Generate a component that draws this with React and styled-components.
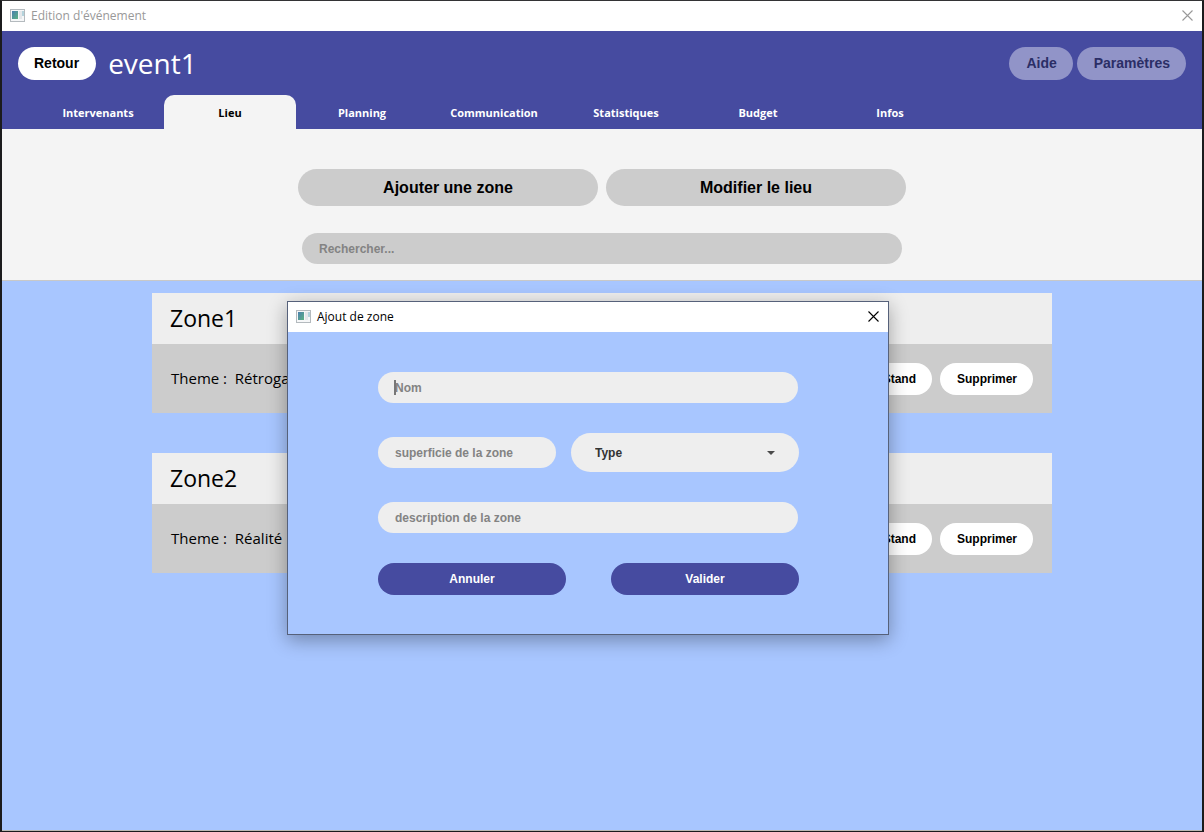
import React from "react";
import styled, { createGlobalStyle } from "styled-components";

const UI_FONT = '"Open Sans", "Noto Sans", sans-serif';
const CONTROL_FONT = '"Liberation Sans", Arial, sans-serif';

const GlobalStyle = createGlobalStyle`
  *, *::before, *::after { box-sizing: border-box; }
  body { margin: 0; background: #1b1b1d; font-family: ${UI_FONT}; color: #000; }
  h1, h2, p { margin: 0; font-weight: 400; }
  button, input, select { font-family: ${CONTROL_FONT}; font-weight: 700; border: 0; outline: 0; margin: 0; }
  button { cursor: pointer; }
`;

const Window = styled.div`
  min-height: 100vh;
  display: flex;
  flex-direction: column;
  border: solid #1b1b1d;
  border-width: 1px 2px;
  border-top-color: #333335;
`;

const TitleBar = styled.div`
  height: 30px;
  flex: none;
  display: flex;
  align-items: center;
  gap: 5px;
  padding: 0 9px 0 8px;
  background: #fff;
  font-size: 12px;
  line-height: 16px;
  color: ${(p) => (p.$active ? "#000" : "#999")};
`;

const TitleText = styled.span`
  flex: 1;
`;

const CloseButton = styled.button`
  display: flex;
  padding: 0 0 2px;
  background: none;
  color: inherit;
`;

const Header = styled.header`
  background: #464ba0;
  display: flex;
  flex-direction: column;
  gap: 15px;
`;

const HeaderRow = styled.div`
  display: flex;
  align-items: center;
  gap: 4px;
  padding: 16px 16px 0;
`;

const EventName = styled.h1`
  flex: 1;
  padding-left: 8px;
  font-size: 28px;
  line-height: 33px;
  color: #fff;
`;

const HeaderButton = styled.button`
  height: 33px;
  padding: 0 17px 2px 16px;
  border-radius: 17px;
  font-size: 14px;
  background: #fff;
  color: #000;

  &:disabled {
    padding: 0 16px 2px 17px;
    background: #9194c8;
    color: #2b2e66;
  }
`;

const Tabs = styled.nav`
  display: flex;
  padding-left: 30px;
`;

const Tab = styled.a`
  width: 132px;
  height: 34px;
  border-radius: 10px 10px 0 0;
  text-align: center;
  text-decoration: none;
  font-size: 11px;
  font-weight: 700;
  line-height: 35px;
  background: ${(p) => (p.$active ? "#f4f4f4" : "transparent")};
  color: ${(p) => (p.$active ? "#000" : "#fff")};
`;

const Tools = styled.section`
  display: flex;
  flex-direction: column;
  align-items: center;
  gap: 27px;
  padding: 40px 16px 16px;
  background: #f4f4f4;
  border-bottom: 1px solid #c8c8c8;
`;

const ToolButtons = styled.div`
  display: flex;
  gap: 8px;
`;

const ToolButton = styled.button`
  width: 300px;
  height: 37px;
  border-radius: 19px;
  background: #ccc;
  font-size: 16px;
  color: #000;
`;

const TextField = styled.input`
  width: 100%;
  max-width: ${(p) => p.$maxWidth || "none"};
  height: 31px;
  padding: 0 17px;
  border-radius: 16px;
  background: ${(p) => (p.$dark ? "#ccc" : "#eee")};
  font-size: 12px;
  color: #333;

  &::placeholder {
    color: #838383;
    opacity: 1;
  }
`;

const ZoneList = styled.main`
  flex: 1;
  display: flex;
  flex-direction: column;
  align-items: center;
  gap: 40px;
  padding: 12px 16px;
  background: #a8c6ff;
  border-bottom: 1px solid #b9b9b4;
`;

const ZoneCard = styled.article`
  width: 100%;
  max-width: 900px;
`;

const ZoneName = styled.h2`
  padding: 0 18px;
  background: #eee;
  font-size: 23px;
  line-height: 51px;
`;

const ZoneBody = styled.div`
  height: 69px;
  display: flex;
  align-items: center;
  gap: 8px;
  padding: 0 19px;
  background: #ccc;
`;

const ZoneTheme = styled.p`
  flex: 1;
  padding-bottom: 2px;
  font-size: 15px;
  line-height: 20px;
  white-space: pre;
`;

const ZoneButton = styled.button`
  height: 32px;
  padding: 0 16px 0 17px;
  border-radius: 16px;
  background: #fff;
  font-size: 12px;
  color: #000;
`;

const Dialog = styled.div`
  position: absolute;
  top: 301px;
  left: 287px;
  width: 602px;
  border: 1px solid #56617a;
  background: #a8c6ff;
  box-shadow: 0 5px 18px rgba(0, 0, 0, 0.33);
`;

const Form = styled.form`
  display: flex;
  flex-direction: column;
  gap: 30px;
  padding: 40px 89px 39px 90px;
`;

const FormRow = styled.div`
  display: grid;
  grid-template-columns: ${(p) => p.$columns};
  gap: ${(p) => p.$gap || "0"};
  align-items: center;
`;

const CaretField = styled.div`
  position: relative;
  display: flex;

  &::after {
    content: "";
    position: absolute;
    left: 16px;
    top: 8px;
    width: 2px;
    height: 15px;
    background: #777;
  }
`;

const SelectBox = styled.div`
  position: relative;
  display: flex;

  svg {
    position: absolute;
    right: 24px;
    top: 18px;
    pointer-events: none;
  }
`;

const Select = styled.select`
  appearance: none;
  width: 100%;
  height: 39px;
  padding: 0 24px;
  border-radius: 20px;
  background: #eee;
  font-size: 12px;
  color: #333;
`;

const SubmitButton = styled.button`
  height: 32px;
  border-radius: 16px;
  background: #464ba0;
  font-size: 12px;
  color: #fff;
`;

function AppIcon() {
  return (
    <svg width="16" height="14" viewBox="0 0 16 14" aria-hidden="true">
      <defs>
        <linearGradient id="pane" x1="0" y1="0" x2="1" y2="1">
          <stop offset="0" stopColor="#4a7fae" />
          <stop offset="1" stopColor="#5db283" />
        </linearGradient>
      </defs>
      <rect x="0.5" y="0.5" width="14" height="12" fill="#f6f7f8" stroke="#b4babe" />
      <rect x="2" y="2" width="6" height="8" fill="url(#pane)" />
      <rect x="9" y="2" width="3" height="8" fill="#e4e7ea" />
      <rect x="12" y="2" width="2" height="5" fill="#b4d3dc" />
    </svg>
  );
}

function CloseIcon() {
  return (
    <svg width="11" height="11" viewBox="0 0 11 11" aria-hidden="true">
      <path d="M0.5 0.5L10.5 10.5M10.5 0.5L0.5 10.5" stroke="currentColor" strokeWidth="1.1" />
    </svg>
  );
}

const TABS = ["Intervenants", "Lieu", "Planning", "Communication", "Statistiques", "Budget", "Infos"];

const ZONES = [
  { name: "Zone1", theme: "Rétrogaming" },
  { name: "Zone2", theme: "Réalité" },
];

function Zone({ name, theme }) {
  return (
    <ZoneCard>
      <ZoneName>{name}</ZoneName>
      <ZoneBody>
        <ZoneTheme>{`Theme :  ${theme}`}</ZoneTheme>
        <ZoneButton type="button">Stand</ZoneButton>
        <ZoneButton type="button">Supprimer</ZoneButton>
      </ZoneBody>
    </ZoneCard>
  );
}

function AddZoneDialog() {
  return (
    <Dialog role="dialog" aria-labelledby="dialog-title">
      <TitleBar $active>
        <AppIcon />
        <TitleText id="dialog-title">Ajout de zone</TitleText>
        <CloseButton type="button" aria-label="Fermer"><CloseIcon /></CloseButton>
      </TitleBar>
      <Form onSubmit={(e) => e.preventDefault()}>
        <CaretField>
          <TextField $maxWidth="420px" aria-label="Nom" placeholder="Nom" />
        </CaretField>
        <FormRow $columns="178fr 228fr" $gap="15px">
          <TextField aria-label="Superficie de la zone" placeholder="superficie de la zone" />
          <SelectBox>
            <Select aria-label="Type" defaultValue="">
              <option value="">Type</option>
            </Select>
            <svg width="8" height="4" viewBox="0 0 8 4" aria-hidden="true">
              <path d="M0 0H8L4 4Z" fill="#4a4a4a" />
            </svg>
          </SelectBox>
        </FormRow>
        <TextField $maxWidth="420px" aria-label="Description de la zone" placeholder="description de la zone" />
        <FormRow $columns="1fr 1fr" $gap="45px">
          <SubmitButton type="button">Annuler</SubmitButton>
          <SubmitButton type="submit">Valider</SubmitButton>
        </FormRow>
      </Form>
    </Dialog>
  );
}

export default function App() {
  return (
    <>
      <GlobalStyle />
      <Window>
        <TitleBar>
          <AppIcon />
          <TitleText>Edition d'événement</TitleText>
          <CloseButton type="button" aria-label="Fermer"><CloseIcon /></CloseButton>
        </TitleBar>
        <Header>
          <HeaderRow>
            <HeaderButton type="button">Retour</HeaderButton>
            <EventName>event1</EventName>
            <HeaderButton type="button" disabled>Aide</HeaderButton>
            <HeaderButton type="button" disabled>Paramètres</HeaderButton>
          </HeaderRow>
          <Tabs>
            {TABS.map((label) => (
              <Tab key={label} href="#" $active={label === "Lieu"}>{label}</Tab>
            ))}
          </Tabs>
        </Header>
        <Tools>
          <ToolButtons>
            <ToolButton type="button">Ajouter une zone</ToolButton>
            <ToolButton type="button">Modifier le lieu</ToolButton>
          </ToolButtons>
          <TextField $dark $maxWidth="600px" type="search" aria-label="Rechercher" placeholder="Rechercher..." />
        </Tools>
        <ZoneList>
          {ZONES.map((zone) => <Zone key={zone.name} {...zone} />)}
        </ZoneList>
      </Window>
      <AddZoneDialog />
    </>
  );
}
